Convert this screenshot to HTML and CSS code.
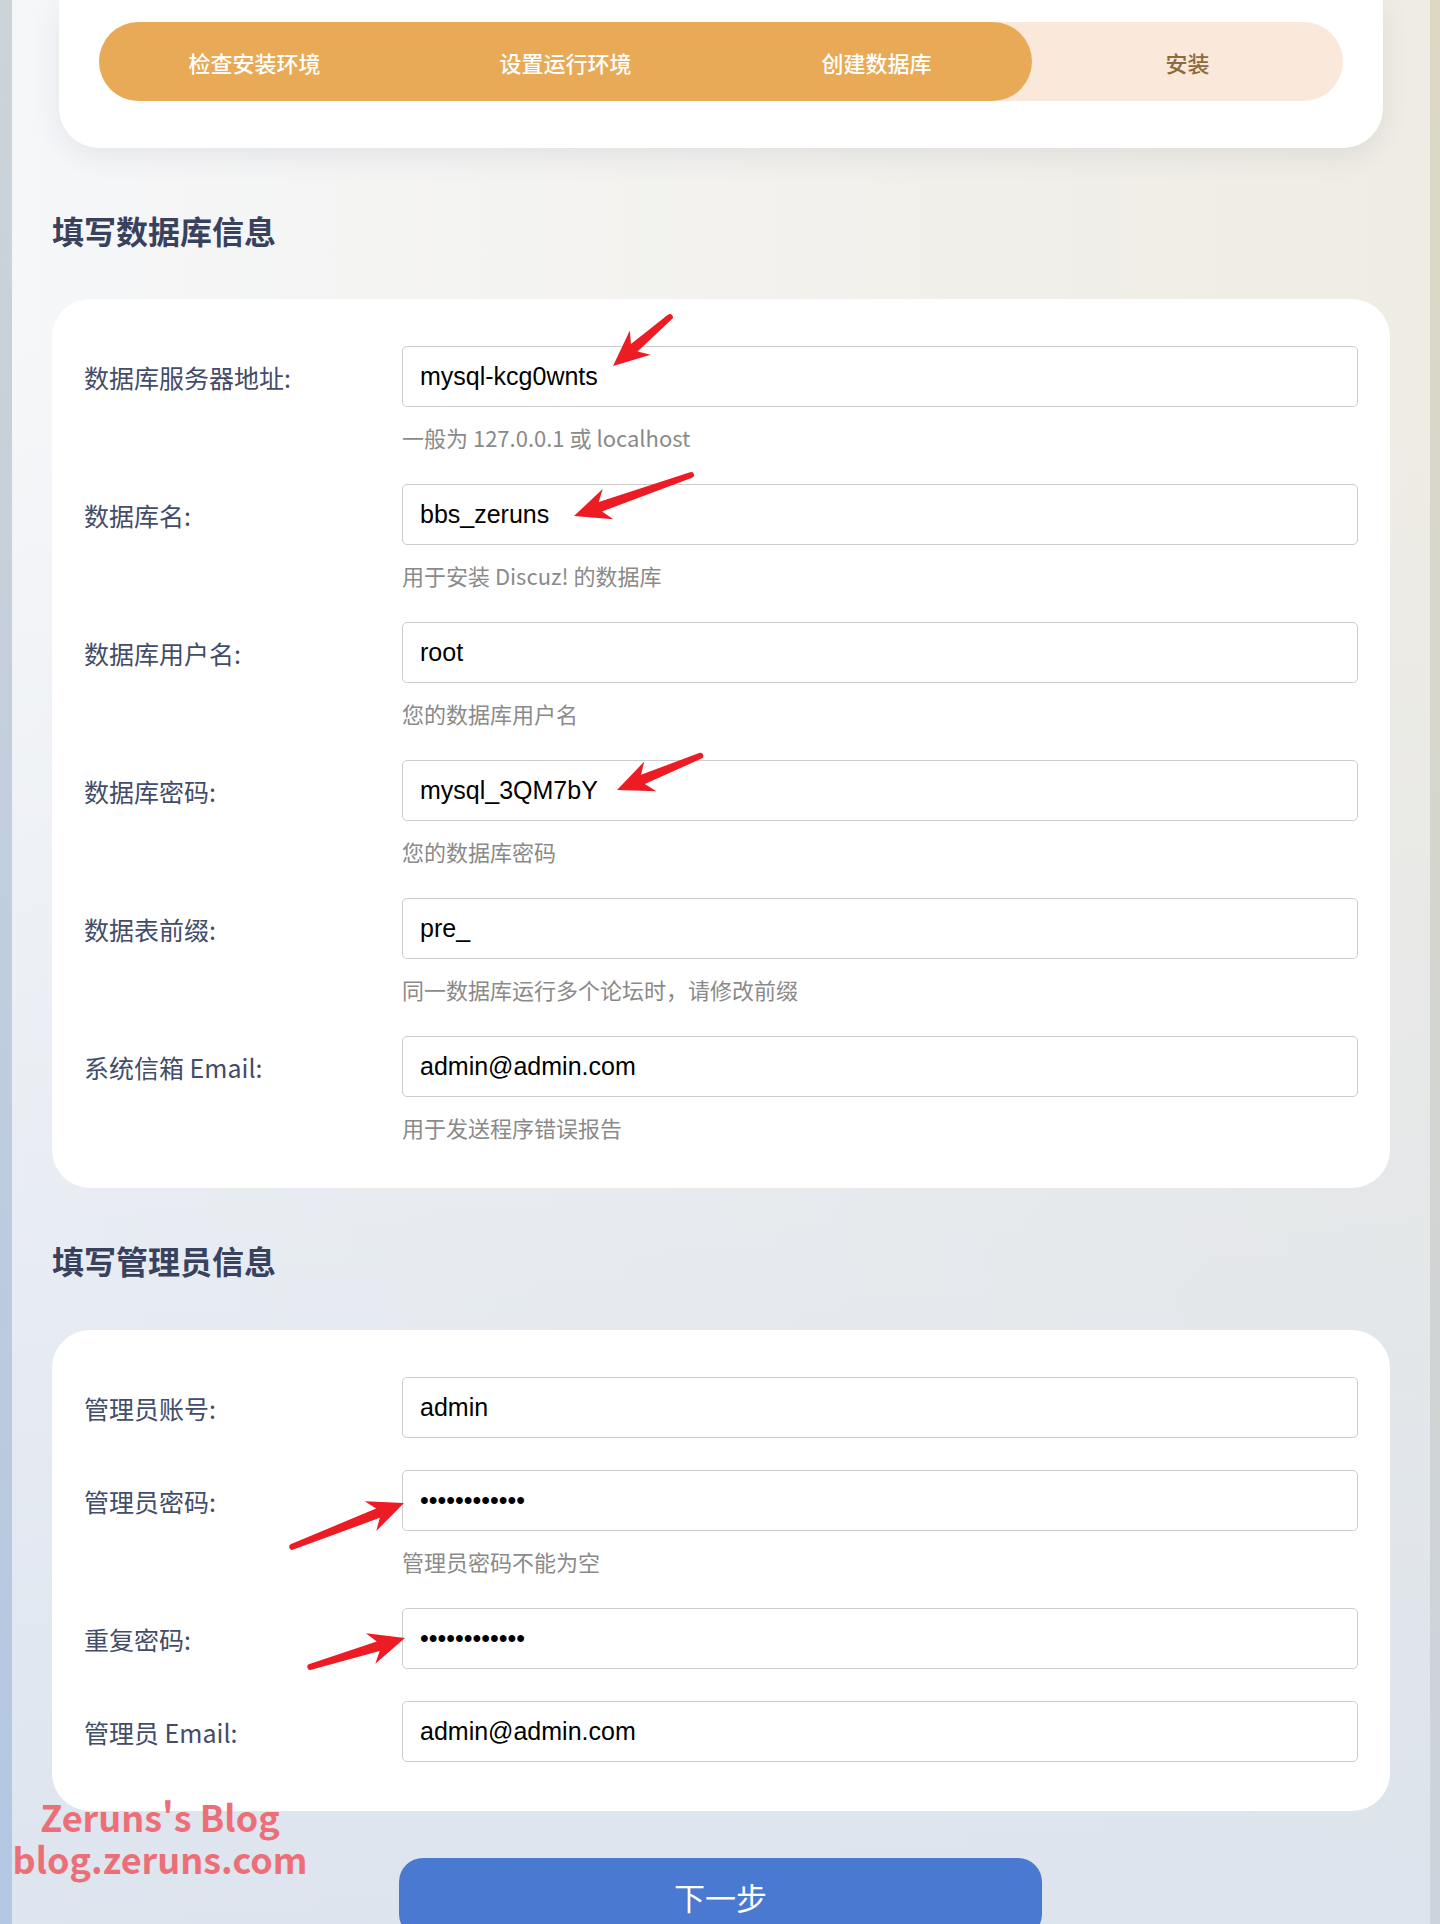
FILE: index.html
```html
<!DOCTYPE html>
<html lang="zh-CN">

<head>
    <meta charset="UTF-8">
    <meta name="viewport" content="width=device-width, initial-scale=1.0">
    <title>Discuz! 安装向导</title>
    <link rel="stylesheet" href="styles.css">
</head>

<body>
    <div class="page">
        <div class="wrap">
            <div class="top-card">
                <div class="steps">
                    <div class="steps-done">
                        <div class="step">检查安装环境</div>
                        <div class="step">设置运行环境</div>
                        <div class="step">创建数据库</div>
                    </div>
                    <div class="step step-todo">安装</div>
                </div>
            </div>

            <h2 class="section-title first">填写数据库信息</h2>
            <div class="form-card">
                <div class="form-row">
                    <label class="form-label">数据库服务器地址:</label>
                    <div class="form-field">
                        <input class="text-input" type="text" value="mysql-kcg0wnts" readonly>
                        <div class="form-hint">一般为 127.0.0.1 或 localhost</div>
                    </div>
                </div>
                <div class="form-row">
                    <label class="form-label">数据库名:</label>
                    <div class="form-field">
                        <input class="text-input" type="text" value="bbs_zeruns" readonly>
                        <div class="form-hint">用于安装 Discuz! 的数据库</div>
                    </div>
                </div>
                <div class="form-row">
                    <label class="form-label">数据库用户名:</label>
                    <div class="form-field">
                        <input class="text-input" type="text" value="root" readonly>
                        <div class="form-hint">您的数据库用户名</div>
                    </div>
                </div>
                <div class="form-row">
                    <label class="form-label">数据库密码:</label>
                    <div class="form-field">
                        <input class="text-input" type="text" value="mysql_3QM7bY" readonly>
                        <div class="form-hint">您的数据库密码</div>
                    </div>
                </div>
                <div class="form-row">
                    <label class="form-label">数据表前缀:</label>
                    <div class="form-field">
                        <input class="text-input" type="text" value="pre_" readonly>
                        <div class="form-hint">同一数据库运行多个论坛时，请修改前缀</div>
                    </div>
                </div>
                <div class="form-row">
                    <label class="form-label">系统信箱 Email:</label>
                    <div class="form-field">
                        <input class="text-input" type="text" value="admin@admin.com" readonly>
                        <div class="form-hint">用于发送程序错误报告</div>
                    </div>
                </div>
            </div>

            <h2 class="section-title">填写管理员信息</h2>
            <div class="form-card admin-card">
                <div class="form-row">
                    <label class="form-label">管理员账号:</label>
                    <div class="form-field">
                        <input class="text-input" type="text" value="admin" readonly>
                    </div>
                </div>
                <div class="form-row">
                    <label class="form-label">管理员密码:</label>
                    <div class="form-field">
                        <input class="text-input" type="password" value="admin1234567" readonly>
                        <div class="form-hint">管理员密码不能为空</div>
                    </div>
                </div>
                <div class="form-row">
                    <label class="form-label">重复密码:</label>
                    <div class="form-field">
                        <input class="text-input" type="password" value="admin1234567" readonly>
                    </div>
                </div>
                <div class="form-row">
                    <label class="form-label">管理员 Email:</label>
                    <div class="form-field">
                        <input class="text-input" type="text" value="admin@admin.com" readonly>
                    </div>
                </div>
            </div>

            <button class="btn-next" type="button">下一步</button>
        </div>

        <div class="watermark">
            <div class="wm-line">Zeruns's Blog</div>
            <div class="wm-line">blog.zeruns.com</div>
        </div>

        <!-- red annotation arrows drawn over the form -->
        <svg class="marks" width="1440" height="1924" viewBox="0 0 1440 1924">
            <g fill="#ed1c24">
                <path transform="translate(613 366) rotate(139.3)" d="M0 0 L-36 -16 L-28 -5 L-75 -3 A3 3 0 0 0 -75 3 L-28 5 L-36 16 Z" />
                <path transform="translate(574 516) rotate(160.7)" d="M0 0 L-36 -16 L-28 -5 L-124 -3 A3 3 0 0 0 -124 3 L-28 5 L-36 16 Z" />
                <path transform="translate(617 790) rotate(157.7)" d="M0 0 L-36 -16 L-28 -5 L-90 -3 A3 3 0 0 0 -90 3 L-28 5 L-36 16 Z" />
                <path transform="translate(404 1503) rotate(-21.4)" d="M0 0 L-36 -16 L-28 -5 L-120 -3 A3 3 0 0 0 -120 3 L-28 5 L-36 16 Z" />
                <path transform="translate(405 1638) rotate(-17)" d="M0 0 L-36 -16 L-28 -5 L-99 -3 A3 3 0 0 0 -99 3 L-28 5 L-36 16 Z" />
            </g>
        </svg>
    </div>
</body>

</html>
```

FILE: styles.css
```css
html,
body {
    width: 100%;
    height: 1924px;
    padding: 0;
    margin: 0;
    overflow: hidden;
}

body {
    font-family: "Noto Sans CJK SC", "Noto Sans", sans-serif;
    background:
        linear-gradient(to bottom, #cdd4d8, #b3c7e3) left top / 12px 100% no-repeat,
        linear-gradient(to bottom, #ddd8c4, #cbd3dc) right top / 10px 100% no-repeat,
        linear-gradient(to bottom, rgba(219, 227, 238, 0) 18%, rgba(219, 227, 238, 0.92) 100%),
        linear-gradient(to right, #f6f7f9, #efece3);
}

.page {
    position: relative;
    height: 1924px;
    overflow: hidden;
}

.wrap {
    width: 1338px;
    margin: 0 0 0 52px;
}

/* progress card */
.top-card {
    margin: 0 7px;
    padding: 22px 40px 47px;
    background-color: #fff;
    border-radius: 0 0 40px 40px;
    box-shadow: 0 8px 28px rgba(60, 72, 100, 0.09);
}

.steps {
    display: flex;
    height: 79px;
    background-color: #fae8da;
    border-radius: 40px;
}

.steps-done {
    flex: 3;
    display: flex;
    background-color: #e8aa56;
    border-radius: 40px;
}

.step {
    flex: 1;
    display: flex;
    align-items: center;
    justify-content: center;
    font-size: 22px;
    font-weight: 500;
    color: #fff;
}

.step-todo {
    color: #8c6a3e;
}

.section-title {
    margin: 52px 0 50px;
    font-size: 32px;
    line-height: 40px;
    font-weight: 700;
    color: #39425d;
}

.section-title.first {
    margin-top: 62px;
    margin-bottom: 49px;
}

/* form cards */
.form-card {
    display: flex;
    flex-direction: column;
    gap: 32px;
    padding: 47px 32px 46px;
    background-color: #fff;
    border-radius: 38px;
}

.admin-card {
    padding-bottom: 49px;
}

.form-row {
    display: flex;
    align-items: flex-start;
}

.form-label {
    width: 318px;
    height: 61px;
    display: flex;
    align-items: center;
    font-size: 25px;
    color: #434c68;
}

.form-field {
    flex: 1;
}

.text-input {
    display: block;
    width: 100%;
    height: 61px;
    box-sizing: border-box;
    padding: 0 17px;
    border: 1px solid #cdcdcd;
    border-radius: 5px;
    background-color: #fff;
    font-family: "Liberation Sans", Arial, sans-serif;
    font-size: 25px;
    color: #000;
    outline: none;
}

.form-hint {
    margin-top: 15px;
    font-size: 22px;
    line-height: 30px;
    color: #8a8a8a;
}

.btn-next {
    display: block;
    width: 643px;
    height: 80px;
    margin: 47px 0 0 347px;
    padding: 0 0 4px;
    border: none;
    border-radius: 24px;
    background-color: #4a79d1;
    font-family: "Noto Sans CJK SC", sans-serif;
    font-size: 31px;
    color: #fff;
}

/* overlays */
.watermark {
    position: absolute;
    left: 0;
    top: 1800px;
    width: 320px;
    text-align: center;
    font-size: 36px;
    font-weight: 700;
    color: #ec6f78;
}

.wm-line {
    height: 42px;
    line-height: 32px;
}

.marks {
    position: absolute;
    top: 0;
    left: 0;
    pointer-events: none;
}
```
